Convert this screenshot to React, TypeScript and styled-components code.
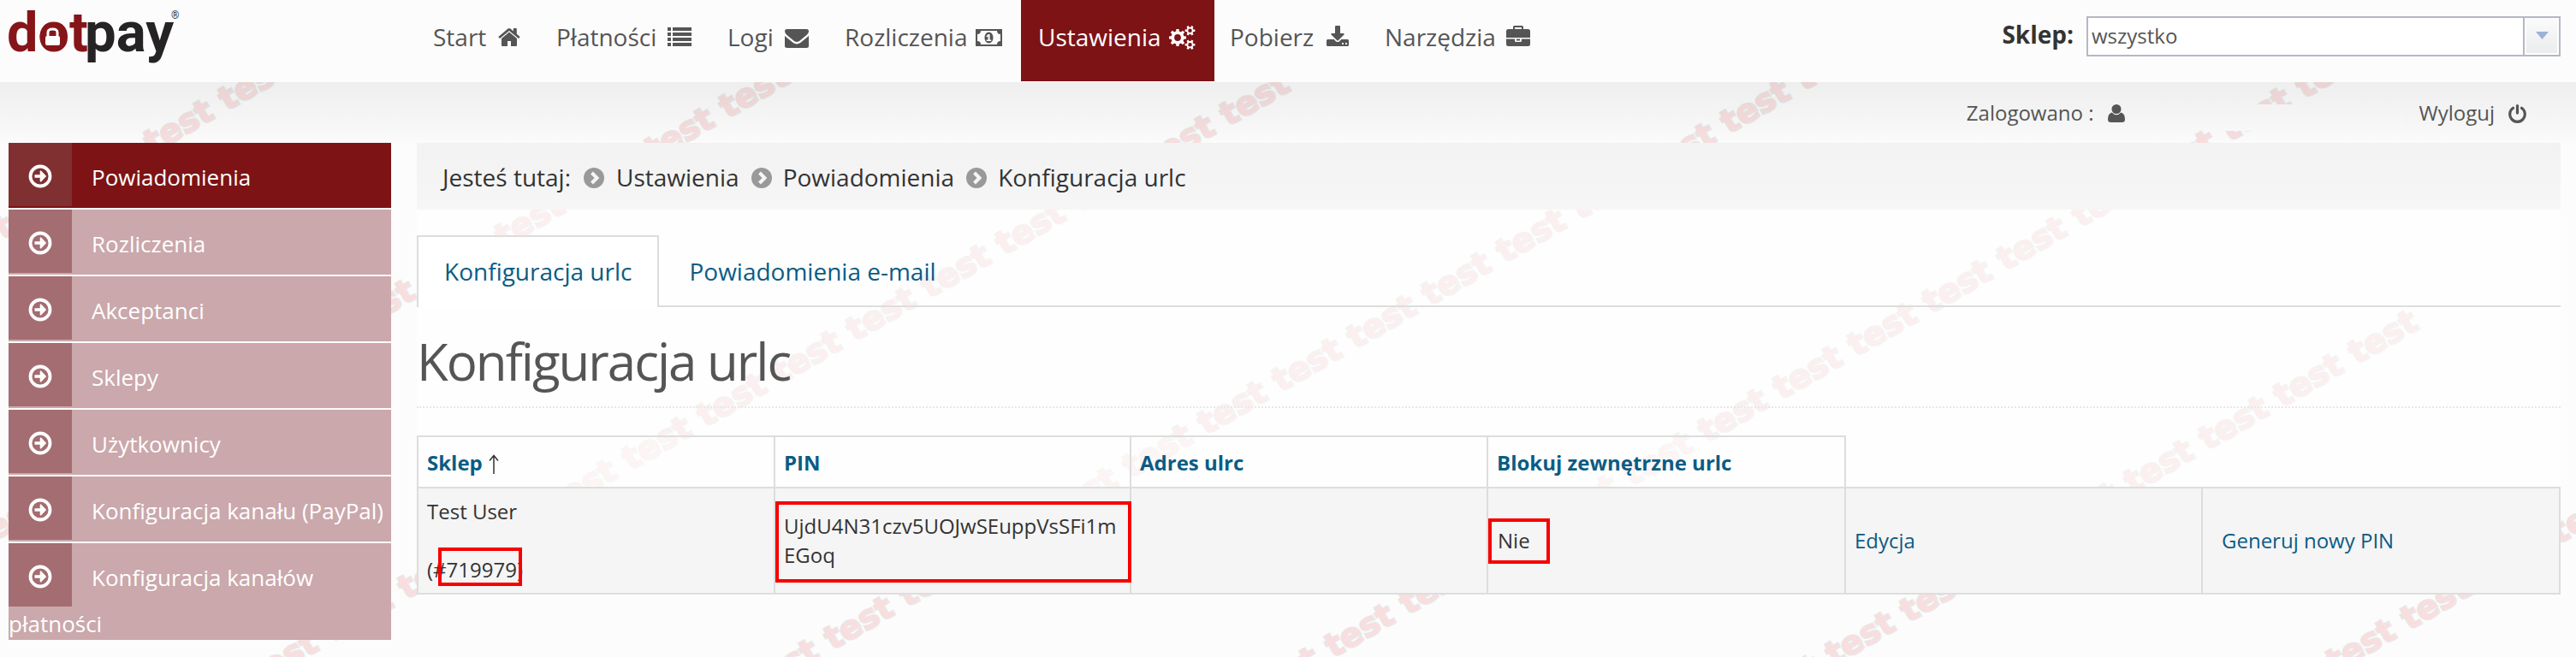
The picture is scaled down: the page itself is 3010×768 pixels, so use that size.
import React from "react";
import styled, { createGlobalStyle } from "styled-components";

const GlobalStyle = createGlobalStyle`
  *, *::before, *::after { box-sizing: border-box; }
  body {
    margin: 0;
    background: #fbfcfb;
    font-family: "Open Sans", "Noto Sans", sans-serif;
    color: #333;
  }
  h1, p, ul { margin: 0; padding: 0; }
  ul { list-style: none; }
  a { color: inherit; text-decoration: none; }
`;

const Page = styled.div`
  position: relative;
  width: 3010px;
  height: 768px;
  overflow: hidden;
  isolation: isolate;
`;

const WatermarkLayer = styled.svg`
  position: absolute;
  inset: 0;
  z-index: -1;
  font: bold 38px "DejaVu Sans", sans-serif;
  fill: #f9dedf;
  stroke: #e8e8e8;
  stroke-width: 2.500px;
  paint-order: stroke;
`;

const Header = styled.header`
  display: flex;
  height: 96px;
  background: #fcfcfc;
`;

const Brand = styled.a`
  width: 486px;
`;

const Nav = styled.nav`
  display: flex;
  flex: 1;
`;

const NavItem = styled.a<{ $active?: boolean; $width: number; $indent?: number }>`
  display: flex;
  align-items: center;
  justify-content: space-between;
  width: ${(p) => p.$width}px;
  height: 95px;
  padding: 0 22px 9px ${(p) => p.$indent ?? 20}px;
  font-size: 28px;
  line-height: 40px;
  white-space: nowrap;
  color: ${(p) => (p.$active ? "#fff" : "#555")};
  background: ${(p) => (p.$active ? "#7d1315" : "transparent")};
  svg { flex: none; margin-top: 2px; fill: currentColor; }
`;

const ShopPicker = styled.label`
  display: flex;
  padding: 19px 18px 0 0;
`;

const ShopLabel = styled.span`
  margin-right: 15px;
  font-size: 28px;
  font-weight: 700;
  line-height: 42px;
`;

const ShopField = styled.span`
  display: flex;
  width: 554px;
  height: 47px;
  border: 2px solid #b5b8c4;
  background: #fff;
`;

const ShopValue = styled.span`
  flex: 1;
  padding-left: 4px;
  font-size: 24px;
  line-height: 41px;
  color: #555;
`;

const ShopButton = styled.span`
  display: flex;
  align-items: center;
  justify-content: center;
  width: 40px;
  border: solid #fff;
  border-width: 0 2px 2px;
  box-shadow: -2px 0 0 #b5b8c4;
  background: linear-gradient(#fbfbfb, #ebecee);
`;

const UserBar = styled.div`
  display: flex;
  justify-content: flex-end;
  height: 71px;
  padding-right: 58px;
  font-size: 24px;
  line-height: 72px;
  color: #555;
  background: linear-gradient(rgba(0, 0, 0, 0.055), rgba(0, 0, 0, 0.025) 70%, rgba(0, 0, 0, 0.005));
  svg { margin-top: 26px; fill: #555; }
`;

const UserName = styled.span`
  width: 314px;
  height: 31px;
  margin: 26px 18px 0 12px;
  border-radius: 8px;
  background: linear-gradient(#f3f3f3, #f8f8f8);
`;

const UserText = styled.span<{ $gap: number }>`
  margin-right: ${(p) => p.$gap}px;
`;

const Body = styled.div`
  display: flex;
  align-items: flex-start;
  gap: 30px;
  padding: 0 18px 0 10px;
`;

const SideMenu = styled.ul`
  display: flex;
  flex-direction: column;
  gap: 2px;
  width: 447px;
  background: #fcfcfc;
`;

const SideItem = styled.li<{ $active?: boolean }>`
  color: #fff;
  font-size: 26px;
  background: ${(p) => (p.$active ? "#7d1315" : "#caa8ab")};
`;

const SideLine = styled.a`
  display: flex;
  height: 76px;
  white-space: nowrap;
  line-height: 80px;
`;

const SideIcon = styled.span<{ $active?: boolean }>`
  display: flex;
  align-items: center;
  justify-content: center;
  width: 74px;
  height: 74px;
  margin-right: 23px;
  padding-top: 3px;
  background: ${(p) => (p.$active ? "#813032" : "#a46d71")};
`;

const SideRest = styled.span`
  display: block;
  height: 37px;
  line-height: 36px;
`;

const Main = styled.main`
  flex: 1;
  background: rgba(255, 255, 255, 0.5);
`;

const Breadcrumbs = styled.div`
  display: flex;
  align-items: center;
  height: 78px;
  padding: 2px 0 0 30px;
  font-size: 28px;
  background: linear-gradient(#f2f2f3, #f6f6f6);
  svg { margin: 1px 13px 0 14px; }
  svg:first-of-type { margin: 1px 14px 0 15px; }
`;

const Tabs = styled.div`
  display: flex;
  margin-top: 30px;
  height: 84px;
  font-size: 28px;
  color: #0a5c85;
`;

const Tab = styled.a<{ $active?: boolean }>`
  padding: 0 30px 0 ${(p) => (p.$active ? 30 : 35)}px;
  border: solid #ddd;
  border-width: ${(p) => (p.$active ? "2px 2px 0 2px" : "0 0 2px 0")};
  background: ${(p) => (p.$active ? "#fff" : "transparent")};
  line-height: ${(p) => (p.$active ? 81 : 85)}px;
`;

const TabsFill = styled.span`
  flex: 1;
  border-bottom: 2px solid #ddd;
`;

const Title = styled.h1`
  height: 118px;
  padding: 22px 0 0;
  border-bottom: 2px dotted #e8e8e8;
  font-size: 60px;
  font-weight: 400;
  line-height: 82px;
  letter-spacing: -2px;
  color: #555;
`;

const Table = styled.div`
  display: grid;
  grid-template-columns: 417px 416px 417px 418px 417px 420px;
  margin-top: 32px;
`;

const HeadCell = styled.div`
  height: 60px;
  padding-left: 10px;
  border: solid #ddd;
  border-width: 2px 0 0 2px;
  background: rgba(255, 255, 255, 0.3);
  font-size: 24px;
  font-weight: 700;
  line-height: 60px;
  color: #0a5c85;
`;

const HeadSpacer = styled.div<{ $first?: boolean }>`
  border-left: ${(p) => (p.$first ? "2px solid #ddd" : "0")};
`;

const SortArrow = styled.svg`
  margin-left: 7px;
  vertical-align: -4px;
`;

const Cell = styled.div<{ $link?: boolean; $indent?: number; $end?: boolean }>`
  display: flex;
  align-items: center;
  height: 126px;
  padding-left: ${(p) => p.$indent ?? 10}px;
  border: solid #ddd;
  border-width: 2px ${(p) => (p.$end ? "2px" : "0")} 2px 2px;
  background: #f5f5f5;
  font-size: 24px;
  line-height: 34px;
  white-space: nowrap;
  color: ${(p) => (p.$link ? "#0a5c85" : "#333")};
`;

const CellText = styled.div`
  position: relative;
`;

const Marker = styled.span<{ $x: number; $y: number; $w: number; $h: number }>`
  position: absolute;
  left: ${(p) => p.$x}px;
  top: ${(p) => p.$y}px;
  width: ${(p) => p.$w}px;
  height: ${(p) => p.$h}px;
  border: 4px solid #f60000;
`;

const WORD_DX = 87.3;
const WORD_DY = 50.3;

function Watermark() {
  const words: { x: number; y: number }[] = [];
  for (let line = 0; line < 7; line++) {
    for (let i = -12; i < 36; i++) {
      const x = 265 + 585 * line - WORD_DX * i;
      const y = 130 + 9 * line + WORD_DY * i;
      const pastEnd = line === 5 && x > 2800;
      if (x > -80 && x < 3010 && y > 80 && y < 830 && !pastEnd) words.push({ x, y });
    }
  }
  return (
    <WatermarkLayer width="3010" height="768" aria-hidden>
      {words.map(({ x, y }) => (
        <text key={`${x}-${y}`} textLength="86" lengthAdjust="spacingAndGlyphs" transform={`translate(${x} ${y}) rotate(-30)`}>
          test
        </text>
      ))}
    </WatermarkLayer>
  );
}

function Logo() {
  return (
    <svg width="230" height="90" viewBox="0 0 230 90" fontFamily="Roboto, sans-serif" fontWeight="700">
      <text x="8" y="60" fontSize="64" fill="#861519" textLength="95" lengthAdjust="spacingAndGlyphs">dot</text>
      <text x="99" y="60" fontSize="64" fill="#262324" textLength="104" lengthAdjust="spacingAndGlyphs">pay</text>
      <ellipse cx="61.500" cy="43" rx="15" ry="16" fill="#861519" />
      <path d="M56 42v-4q0-4 5.500-4t5.500 4v4" fill="none" stroke="#fcfcfc" strokeWidth="3" />
      <rect x="53" y="42" width="17" height="11" rx="2" fill="#fcfcfc" />
      <rect x="58" y="36" width="7" height="5" fill="#861519" />
      <text x="200" y="22" fontSize="12" fontWeight="400" fill="#333">®</text>
    </svg>
  );
}

const HomeIcon = () => (
  <svg width="26" height="28" viewBox="0 0 26 28">
    <path d="M13 7.500 4 15v8.200q0 .8.8.8H11v-6h4v6h6.200q.8 0 .8-.8V15z" />
    <path d="m.6 13.600 1 1.100q.4.300.8 0L13 5.900l10.600 8.800q.4.300.8 0l1-1.100q.300-.5-.1-.8L21.800 9.800V3.500q0-.5-.5-.5h-3q-.5 0-.5.5v3l-3.300-2.900q-1.500-1.100-3 0L.7 12.800q-.4.300-.1.800z" />
  </svg>
);

const ListIcon = () => (
  <svg width="28" height="28" viewBox="0 0 28 28">
    {[2, 8, 14, 20].map((y) => (
      <path key={y} d={`M0 ${y}h4v4H0zM6 ${y}h22v4H6z`} />
    ))}
  </svg>
);

const MailIcon = () => (
  <svg width="28" height="28" viewBox="0 0 28 28">
    <path d="M0 6.500Q0 4 2.500 4h23Q28 4 28 6.500q0 2-2.500 4.500l-8.500 7q-3 2.200-6 0L2.500 11Q0 8.500 0 6.500z" />
    <path d="M0 11.500q.8 1.300 1.800 2.100l8 6.500q4.200 2.900 8.400 0l8-6.500q1-.8 1.800-2.100V23.500q0 2.500-2.500 2.500h-23Q0 26 0 23.500z" />
  </svg>
);

const MoneyIcon = () => (
  <svg width="31" height="28" viewBox="0 0 31 28">
    <path fillRule="evenodd" d="M0 4h31v20H0zM6 6q0 4-4 4v8q4 0 4 4h19q0-4 4-4v-8q-4 0-4-4z" />
    <path fillRule="evenodd" d="M15.500 7.500c3 0 5 3 5 6.500s-2 6.500-5 6.500-5-3-5-6.500 2-6.500 5-6.500zm-.7 2.500-2.500 2.200 1 1.200 1.200-1v4.100h-1.800V18h5.500v-1.500h-1.600V10z" />
  </svg>
);

function gearPath(cx: number, cy: number, outer: number, inner: number, teeth: number) {
  const points: string[] = [];
  const step = (Math.PI * 2) / teeth;
  for (let i = 0; i < teeth; i++) {
    const a = i * step;
    [[-0.3, inner], [-0.2, outer], [0.2, outer], [0.3, inner]].forEach(([t, r]) => {
      points.push(`${(cx + Math.cos(a + t * step) * r).toFixed(2)} ${(cy + Math.sin(a + t * step) * r).toFixed(2)}`);
    });
  }
  const hole = outer * 0.38;
  return `M${points.join("L")}ZM${cx - hole} ${cy}a${hole} ${hole} 0 1 0 ${hole * 2} 0a${hole} ${hole} 0 1 0 ${-hole * 2} 0z`;
}

const CogsIcon = () => (
  <svg width="31" height="28" viewBox="0 0 31 28" fillRule="evenodd">
    <path d={gearPath(10, 14, 10.2, 7.6, 8)} />
    <path d={gearPath(24.5, 5.8, 6, 4.2, 6)} />
    <path d={gearPath(24.5, 22.2, 6, 4.2, 6)} />
  </svg>
);

const DownloadIcon = () => (
  <svg width="26" height="28" viewBox="0 0 26 28">
    <path d="M10 1q0-1 1-1h4q1 0 1 1v8h4q1.400.2.5 1.500l-6.800 6.800q-.7.600-1.400 0L5.500 10.500Q4.600 9.200 6 9h4z" />
    <path fillRule="evenodd" d="M1.500 16h7.200l2.200 2.200q2.100 1.800 4.200 0l2.200-2.200h7.200q1.500 0 1.500 1.500v5q0 1.500-1.500 1.500h-23Q0 24 0 22.500v-5Q0 16 1.500 16zM18 20v2h2v-2zm4 0v2h2v-2z" />
  </svg>
);

const BriefcaseIcon = () => (
  <svg width="28" height="28" viewBox="0 0 28 28">
    <path d="M8 4V1.500Q8 0 9.500 0h9Q20 0 20 1.500V4h5.500Q28 4 28 6.500V14H0V6.500Q0 4 2.500 4zm2 0h8V2h-8z" fillRule="evenodd" />
    <path d="M0 15.500h10v2q0 1.500 1.500 1.500h5q1.500 0 1.500-1.500v-2h10v6q0 2.500-2.500 2.500h-23Q0 24 0 21.500zM12 15.500h4V17.500h-4z" />
  </svg>
);

const UserIcon = () => (
  <svg width="20" height="22" viewBox="0 0 20 22">
    <ellipse cx="10" cy="5.500" rx="5.500" ry="5.500" />
    <path d="M4.800 9.500Q0 10.500 0 17.500q0 3.500 3.500 3.500h13q3.500 0 3.500-3.500 0-7-4.800-8Q13 12.200 10 12.200T4.800 9.500z" />
  </svg>
);

const PowerIcon = () => (
  <svg width="21" height="23" viewBox="0 0 21 23">
    <path d="M5.500 4.300A8.800 8.800 0 1 0 15.500 4.300" style={{ fill: "none" }} stroke="#555" strokeWidth="3.200" strokeLinecap="round" />
    <path d="M10.500 1.600v8.500" stroke="#555" strokeWidth="3.200" strokeLinecap="round" />
  </svg>
);

const CircleArrowIcon = () => (
  <svg width="28" height="28" viewBox="0 0 28 28" fill="none" stroke="#fff">
    <circle cx="14" cy="14" r="11.500" strokeWidth="3.800" />
    <path d="M7.500 12.200h6.200V8l1-.7 6.500 6.700-6.500 6.700-1-.7v-4.200H7.500z" fill="#fff" stroke="none" />
  </svg>
);

const CrumbIcon = () => (
  <svg width="24" height="24" viewBox="0 0 24 24">
    <circle cx="12" cy="12" r="12" fill="#999" />
    <path d="m9.500 6 6 6-6 6" fill="none" stroke="#f5f5f5" strokeWidth="4" />
  </svg>
);

const NAV = [
  { label: "Start", Icon: HomeIcon, width: 144 },
  { label: "Płatności", Icon: ListIcon, width: 200 },
  { label: "Logi", Icon: MailIcon, width: 137 },
  { label: "Rozliczenia", Icon: MoneyIcon, width: 226 },
  { label: "Ustawienia", Icon: CogsIcon, width: 226, active: true },
  { label: "Pobierz", Icon: DownloadIcon, width: 179, indent: 18 },
  { label: "Narzędzia", Icon: BriefcaseIcon, width: 212 },
];

const SIDE = [
  { label: "Powiadomienia", active: true },
  { label: "Rozliczenia" },
  { label: "Akceptanci" },
  { label: "Sklepy" },
  { label: "Użytkownicy" },
  { label: "Konfiguracja kanału (PayPal)" },
  { label: "Konfiguracja kanałów", rest: "płatności" },
];

const CRUMBS = ["Ustawienia", "Powiadomienia", "Konfiguracja urlc"];

export default function App() {
  return (
    <Page>
      <GlobalStyle />
      <Watermark />
      <Header>
        <Brand><Logo /></Brand>
        <Nav>
          {NAV.map(({ label, Icon, active, width, indent }) => (
            <NavItem key={label} $active={active} $width={width} $indent={indent}>{label}<Icon /></NavItem>
          ))}
        </Nav>
        <ShopPicker>
          <ShopLabel>Sklep:</ShopLabel>
          <ShopField>
            <ShopValue>wszystko</ShopValue>
            <ShopButton>
              <svg width="15" height="9" viewBox="0 0 15 9"><path d="M0 0h15L7.500 9z" fill="#9db2d6" /></svg>
            </ShopButton>
          </ShopField>
        </ShopPicker>
      </Header>
      <UserBar>
        <UserText $gap={16}>Zalogowano :</UserText>
        <UserIcon />
        <UserName />
        <UserText $gap={16}>Wyloguj</UserText>
        <PowerIcon />
      </UserBar>
      <Body>
        <SideMenu>
          {SIDE.map(({ label, rest, active }) => (
            <SideItem key={label} $active={active}>
              <SideLine>
                <SideIcon $active={active}><CircleArrowIcon /></SideIcon>
                {label}
              </SideLine>
              {rest && <SideRest>{rest}</SideRest>}
            </SideItem>
          ))}
        </SideMenu>
        <Main>
          <Breadcrumbs>
            Jesteś tutaj:
            {CRUMBS.map((crumb) => (
              <React.Fragment key={crumb}><CrumbIcon />{crumb}</React.Fragment>
            ))}
          </Breadcrumbs>
          <Tabs>
            <Tab $active>Konfiguracja urlc</Tab>
            <Tab>Powiadomienia e-mail</Tab>
            <TabsFill />
          </Tabs>
          <Title>Konfiguracja urlc</Title>
          <Table>
            <HeadCell>
              Sklep
              <SortArrow width="12" height="23" viewBox="0 0 12 23" fill="none" stroke="#333" strokeWidth="1.500">
                <path d="M6 23V2M1 7.500 6 1.500l5 6" />
              </SortArrow>
            </HeadCell>
            <HeadCell>PIN</HeadCell>
            <HeadCell>Adres ulrc</HeadCell>
            <HeadCell>Blokuj zewnętrzne urlc</HeadCell>
            <HeadSpacer $first />
            <HeadSpacer />
            <Cell>
              <CellText>
                <p>Test User</p>
                <br />
                <p>(#719979)</p>
                <Marker $x={13} $y={59} $w={98} $h={45} />
              </CellText>
            </Cell>
            <Cell>
              <CellText>
                UjdU4N31czv5UOJwSEuppVsSFi1m<br />EGoq
                <Marker $x={-10} $y={-12} $w={416} $h={95} />
              </CellText>
            </Cell>
            <Cell />
            <Cell $indent={11}>
              <CellText>
                Nie
                <Marker $x={-11} $y={-9} $w={72} $h={53} />
              </CellText>
            </Cell>
            <Cell $link>Edycja</Cell>
            <Cell $link $end $indent={22}>Generuj nowy PIN</Cell>
          </Table>
        </Main>
      </Body>
    </Page>
  );
}
